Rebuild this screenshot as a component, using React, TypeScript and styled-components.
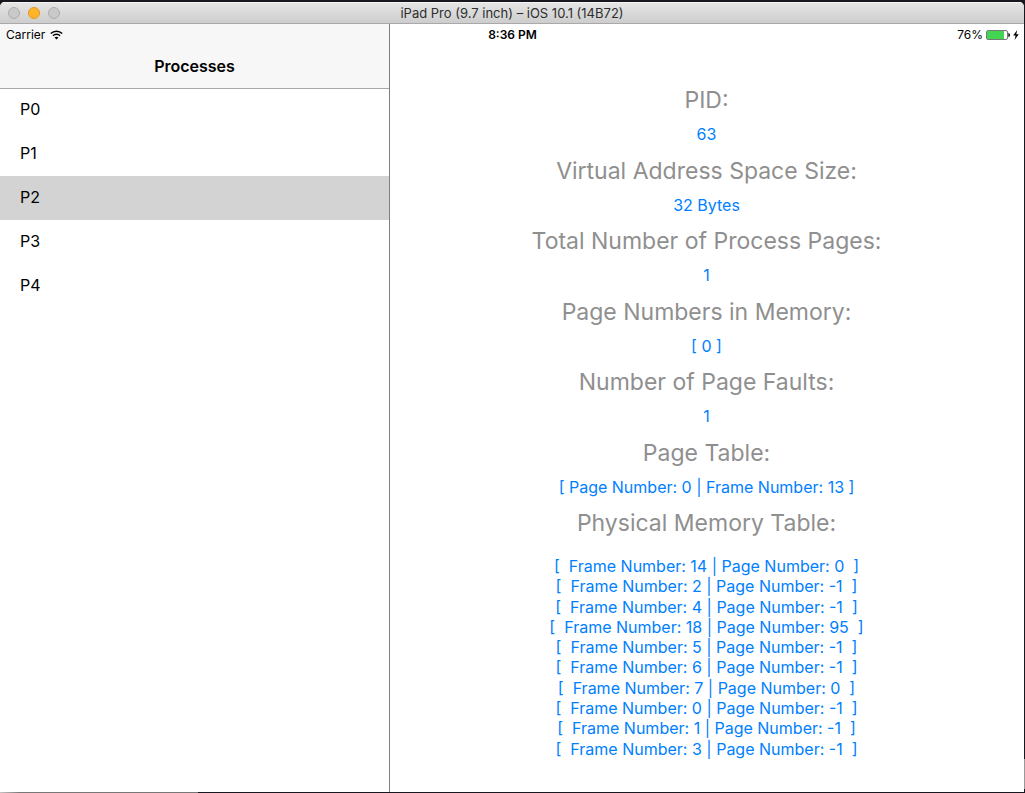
import React, { useState } from "react";
import styled, { createGlobalStyle } from "styled-components";

const GlobalStyle = createGlobalStyle`
  * {
    box-sizing: border-box;
  }
  body {
    margin: 0;
    background: #17181f;
    font-family: Inter, "Liberation Sans", sans-serif;
    color: #000;
  }
`;

const Desktop = styled.div`
  display: flex;
  min-height: 100vh;
  padding: 2px 1px 1px 0;
  background:
    linear-gradient(90deg, #c4c4c4, #777 20px) left bottom / 198px 1px no-repeat,
    linear-gradient(#999, #999) right bottom 4px / 1px 30px no-repeat,
    #17181f;
`;

const SimulatorWindow = styled.div`
  display: flex;
  flex: 1;
  flex-direction: column;
  overflow: hidden;
  border-radius: 5px 5px 0 0;
  background: #fff;
`;

const TitleBar = styled.header`
  display: grid;
  grid-template-columns: 1fr auto 1fr;
  align-items: center;
  height: 22px;
  padding: 0 8px;
  border-bottom: 1px solid #a9a9a9;
  background: linear-gradient(#e6e6e6, #cdcdcd);
  box-shadow: inset 0 1px #f3f3f3;
`;

const WindowControls = styled.div`
  display: flex;
  gap: 8px;
`;

const WindowButton = styled.button<{ $fill: string; $edge: string }>`
  width: 12px;
  height: 12px;
  padding: 0;
  border: 1px solid ${(p) => p.$edge};
  border-radius: 50%;
  background: ${(p) => p.$fill};
`;

const WindowTitle = styled.h1`
  margin: 0;
  font-size: 13px;
  font-weight: 400;
  line-height: 20px;
  color: #2e2e2e;
  white-space: nowrap;
`;

const Screen = styled.div`
  position: relative;
  display: flex;
  flex: 1;
`;

const StatusBar = styled.div`
  position: absolute;
  top: 0;
  right: 0;
  left: 0;
  display: grid;
  grid-template-columns: 1fr auto 1fr;
  align-items: center;
  height: 21px;
  padding: 0 5px 0 6px;
  font-size: 12px;
  line-height: 21px;
`;

const StatusGroup = styled.div<{ $end?: boolean }>`
  display: flex;
  align-items: center;
  justify-content: ${(p) => (p.$end ? "flex-end" : "flex-start")};
  gap: ${(p) => (p.$end ? 3 : 5)}px;
`;

const Clock = styled.time`
  font-weight: 600;
`;

const Sidebar = styled.nav`
  flex: 0 0 390px;
  border-right: 1px solid #7f7f7f;
`;

const NavBar = styled.div`
  height: 64px;
  padding-top: 20px;
  background: #f7f7f7;
`;

const NavTitle = styled.h2`
  margin: 0;
  font-size: 16px;
  font-weight: 600;
  line-height: 44px;
  text-align: center;
`;

const ProcessList = styled.ul`
  margin: 0;
  padding: 0;
  list-style: none;
`;

const ProcessRow = styled.button<{ $selected: boolean }>`
  display: block;
  width: 100%;
  height: 44px;
  padding: 0 20px 2px;
  border: 0;
  background: ${(p) => (p.$selected ? "#d3d3d3" : "transparent")};
  font: inherit;
  font-size: 16px;
  line-height: 42px;
  text-align: left;
  color: #000;
`;

const ProcessItem = styled.li`
  &:first-child ${ProcessRow} {
    box-shadow: inset 0 1px #a7a7aa;
  }
`;

const Detail = styled.main`
  flex: 1;
  padding: 60px 1px 0 0;
  text-align: center;
`;

const Fields = styled.dl`
  display: grid;
  grid-auto-rows: 1fr;
  min-height: 423px;
  margin: 0;
`;

const Label = styled.dt`
  font-size: 23px;
  line-height: 32px;
  color: #8f8f8f;
`;

const Value = styled.dd`
  margin: 0;
  font-size: 16px;
  line-height: 36px;
  color: #0080ff;
`;

const MemoryTitle = styled.h3`
  margin: 0;
  font-size: 23px;
  font-weight: 400;
  line-height: 32px;
  color: #8f8f8f;
`;

const MemoryTable = styled.ul`
  display: grid;
  grid-auto-rows: 1fr;
  min-height: 203px;
  margin: 17px 0 0;
  padding: 0;
  list-style: none;
  font-size: 16px;
  line-height: 20px;
  white-space: pre;
  color: #0080ff;
`;

const processes = ["P0", "P1", "P2", "P3", "P4"];

const fields = [
  ["PID:", "63"],
  ["Virtual Address Space Size:", "32 Bytes"],
  ["Total Number of Process Pages:", "1"],
  ["Page Numbers in Memory:", "[ 0 ]"],
  ["Number of Page Faults:", "1"],
  ["Page Table:", "[ Page Number: 0 | Frame Number: 13 ]"],
];

const frames = [
  [14, 0],
  [2, -1],
  [4, -1],
  [18, 95],
  [5, -1],
  [6, -1],
  [7, 0],
  [0, -1],
  [1, -1],
  [3, -1],
];

const WifiIcon = () => (
  <svg width="13" height="10" viewBox="0 0 13 10" fill="none" stroke="#000" aria-label="Wi-Fi">
    <path d="M0.8 3.6C4 0.3 9 0.3 12.2 3.6" strokeWidth="1.5" />
    <path d="M2.9 5.8C4.9 3.8 8.1 3.8 10.1 5.8" strokeWidth="1.5" />
    <path d="M4.5 7.5C5.6 6.4 7.4 6.4 8.5 7.5L6.5 9.5Z" fill="#000" stroke="none" />
  </svg>
);

const BatteryIcon = () => (
  <svg width="24" height="10" viewBox="0 0 24 10" aria-label="Battery">
    <rect x="0.5" y="0.5" width="21" height="9" rx="1.5" fill="#fff" stroke="#777" />
    <rect x="1" y="1" width="17" height="8" rx="0.5" fill="#43d551" />
    <path d="M22.7 3.2C24 3.7 24 6.3 22.7 6.8Z" fill="#000" stroke="#000" strokeWidth="0.6" />
  </svg>
);

const BoltIcon = () => (
  <svg width="6" height="10" viewBox="0 0 6 10" aria-label="Charging">
    <path d="M4.2 0L0.2 5.6H2.6L1.6 10L5.8 4.2H3.3Z" fill="#000" />
  </svg>
);

export default function App() {
  const [selected, setSelected] = useState("P2");

  return (
    <>
      <GlobalStyle />
      <Desktop>
        <SimulatorWindow>
          <TitleBar>
            <WindowControls>
              <WindowButton $fill="#c9c9c9" $edge="#adadad" aria-label="Close" />
              <WindowButton $fill="#ffb42b" $edge="#e09a1a" aria-label="Minimize" />
              <WindowButton $fill="#c9c9c9" $edge="#adadad" aria-label="Zoom" />
            </WindowControls>
            <WindowTitle>iPad Pro (9.7 inch) – iOS 10.1 (14B72)</WindowTitle>
          </TitleBar>
          <Screen>
            <Sidebar>
              <NavBar>
                <NavTitle>Processes</NavTitle>
              </NavBar>
              <ProcessList>
                {processes.map((name) => (
                  <ProcessItem key={name}>
                    <ProcessRow $selected={name === selected} onClick={() => setSelected(name)}>
                      {name}
                    </ProcessRow>
                  </ProcessItem>
                ))}
              </ProcessList>
            </Sidebar>
            <Detail>
              <Fields>
                {fields.map(([label, value]) => (
                  <div key={label}>
                    <Label>{label}</Label>
                    <Value>{value}</Value>
                  </div>
                ))}
              </Fields>
              <MemoryTitle>Physical Memory Table:</MemoryTitle>
              <MemoryTable>
                {frames.map(([frame, page]) => (
                  <li key={frame}>{`[  Frame Number: ${frame} | Page Number: ${page}  ]`}</li>
                ))}
              </MemoryTable>
            </Detail>
            <StatusBar>
              <StatusGroup>
                <span>Carrier</span>
                <WifiIcon />
              </StatusGroup>
              <Clock>8:36 PM</Clock>
              <StatusGroup $end>
                <span>76%</span>
                <BatteryIcon />
                <BoltIcon />
              </StatusGroup>
            </StatusBar>
          </Screen>
        </SimulatorWindow>
      </Desktop>
    </>
  );
}
